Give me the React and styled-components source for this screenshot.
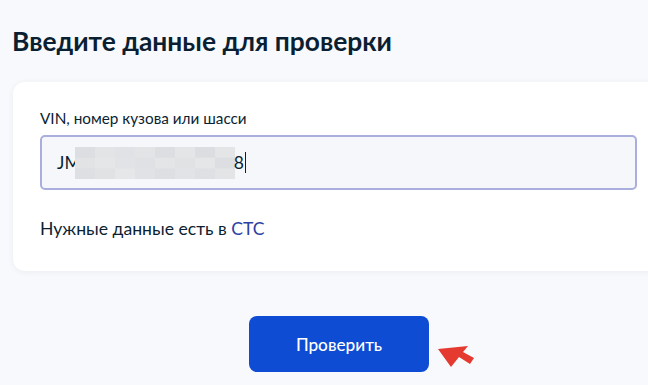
import React from "react";
import styled, { createGlobalStyle } from "styled-components";

const Global = createGlobalStyle`
  html, body { margin: 0; padding: 0; background: #f8f9fc; }
  body { font-family: Lato, "Noto Sans", sans-serif; color: #0b1f33; }
  * { box-sizing: border-box; }
`;

const Page = styled.div`
  width: 648px;
  height: 385px;
  overflow: hidden;
  padding: 24px 0 0 13px;
  display: flex;
  flex-direction: column;
`;

const Title = styled.h1`
  margin: 0 0 0 -1px;
  font-size: 26.4px;
  line-height: 34px;
  font-weight: 700;
  color: #0b1f33;
`;

const Card = styled.div`
  margin-top: 24px;
  width: 660px;
  height: 189px;
  background: #fff;
  border-radius: 12px;
  box-shadow: 0 1px 6px rgba(11, 31, 51, 0.06);
  padding: 25px 0 0 27px;
  display: flex;
  flex-direction: column;
`;

const Label = styled.div`
  font-size: 15.3px;
  line-height: 22px;
  color: #0b1f33;
`;

const Field = styled.div`
  margin-top: 6px;
  width: 597px;
  height: 55px;
  border: 2px solid #a9aedc;
  border-radius: 5px;
  background: #f5f7fa;
  display: flex;
  align-items: center;
  padding-left: 15px;
  font-size: 17.5px;
  color: #0b1f33;
`;

const Blur = styled.div`
  margin-left: -6px;
  margin-right: -1px;
`;

const Caret = styled.span`
  display: inline-block;
  width: 1px;
  height: 21px;
  background: #0b1f33;
  margin-left: 1px;
`;

const Hint = styled.div`
  margin-top: 26px;
  font-size: 17.6px;
  line-height: 26px;
  color: #0b1f33;
`;

const Link = styled.a`
  color: #2c3fa3;
  text-decoration: none;
`;

const ButtonRow = styled.div`
  margin-top: 45px;
  margin-left: 236px;
  display: flex;
  align-items: flex-start;
`;

const Button = styled.button`
  width: 180px;
  height: 56px;
  border: none;
  border-radius: 8px;
  background: #0d4cd3;
  color: #fff;
  font-family: Lato, "Noto Sans", sans-serif;
  font-size: 17.2px;
  font-weight: 500;
  padding: 0;
`;

const ArrowBox = styled.div`
  margin: 24px 0 0 3px;
  width: 45px;
  height: 32px;
`;

const blocks = [
  [0,0,"#dcdee1"],[1,0,"#e2e4e6"],[2,0,"#e0e2e5"],[3,0,"#e3e4e6"],[4,0,"#dcdee1"],[5,0,"#e4e5e7"],[6,0,"#dbdde0"],[7,0,"#e3e5e7"],
  [0,1,"#e1e3e5"],[1,1,"#e5e6e8"],[2,1,"#e2e3e6"],[3,1,"#dfe1e4"],[4,1,"#e4e5e7"],[5,1,"#e0e2e4"],[6,1,"#e5e6e8"],[7,1,"#dcdee1"],
  [0,2,"#dddfe2"],[1,2,"#e0e2e4"],[2,2,"#e6e7e9"],[3,2,"#e1e2e5"],[4,2,"#dedfe2"],[5,2,"#e2e3e6"],[6,2,"#dfe0e3"],[7,2,"#e2e4e6"],
];

function Pixelated() {
  return (
    <svg width="160" height="32" viewBox="0 0 160 32" style={{ display: "block" }}>
      {blocks.map(([x, y, c], i) => (
        <rect key={i} x={x * 20} y={y * 10.7} width={21} height={11.5} fill={c} />
      ))}
    </svg>
  );
}

function Arrow() {
  return (
    <svg width="45" height="32" viewBox="0 0 45 32" style={{ display: "block" }}>
      <path d="M6 9 L36 6 L31 12 L42 18 L38 24 L27 17 L19 27 Z" fill="#e53a2f" />
    </svg>
  );
}

export default function App() {
  return (
    <>
      <Global />
      <Page>
        <Title>Введите данные для проверки</Title>
        <Card>
          <Label>VIN, номер кузова или шасси</Label>
          <Field>
            <span>JM</span>
            <Blur>
              <Pixelated />
            </Blur>
            <span>8</span>
            <Caret />
          </Field>
          <Hint>
            Нужные данные есть в <Link>СТС</Link>
          </Hint>
        </Card>
        <ButtonRow>
          <Button>Проверить</Button>
          <ArrowBox>
            <Arrow />
          </ArrowBox>
        </ButtonRow>
      </Page>
    </>
  );
}
